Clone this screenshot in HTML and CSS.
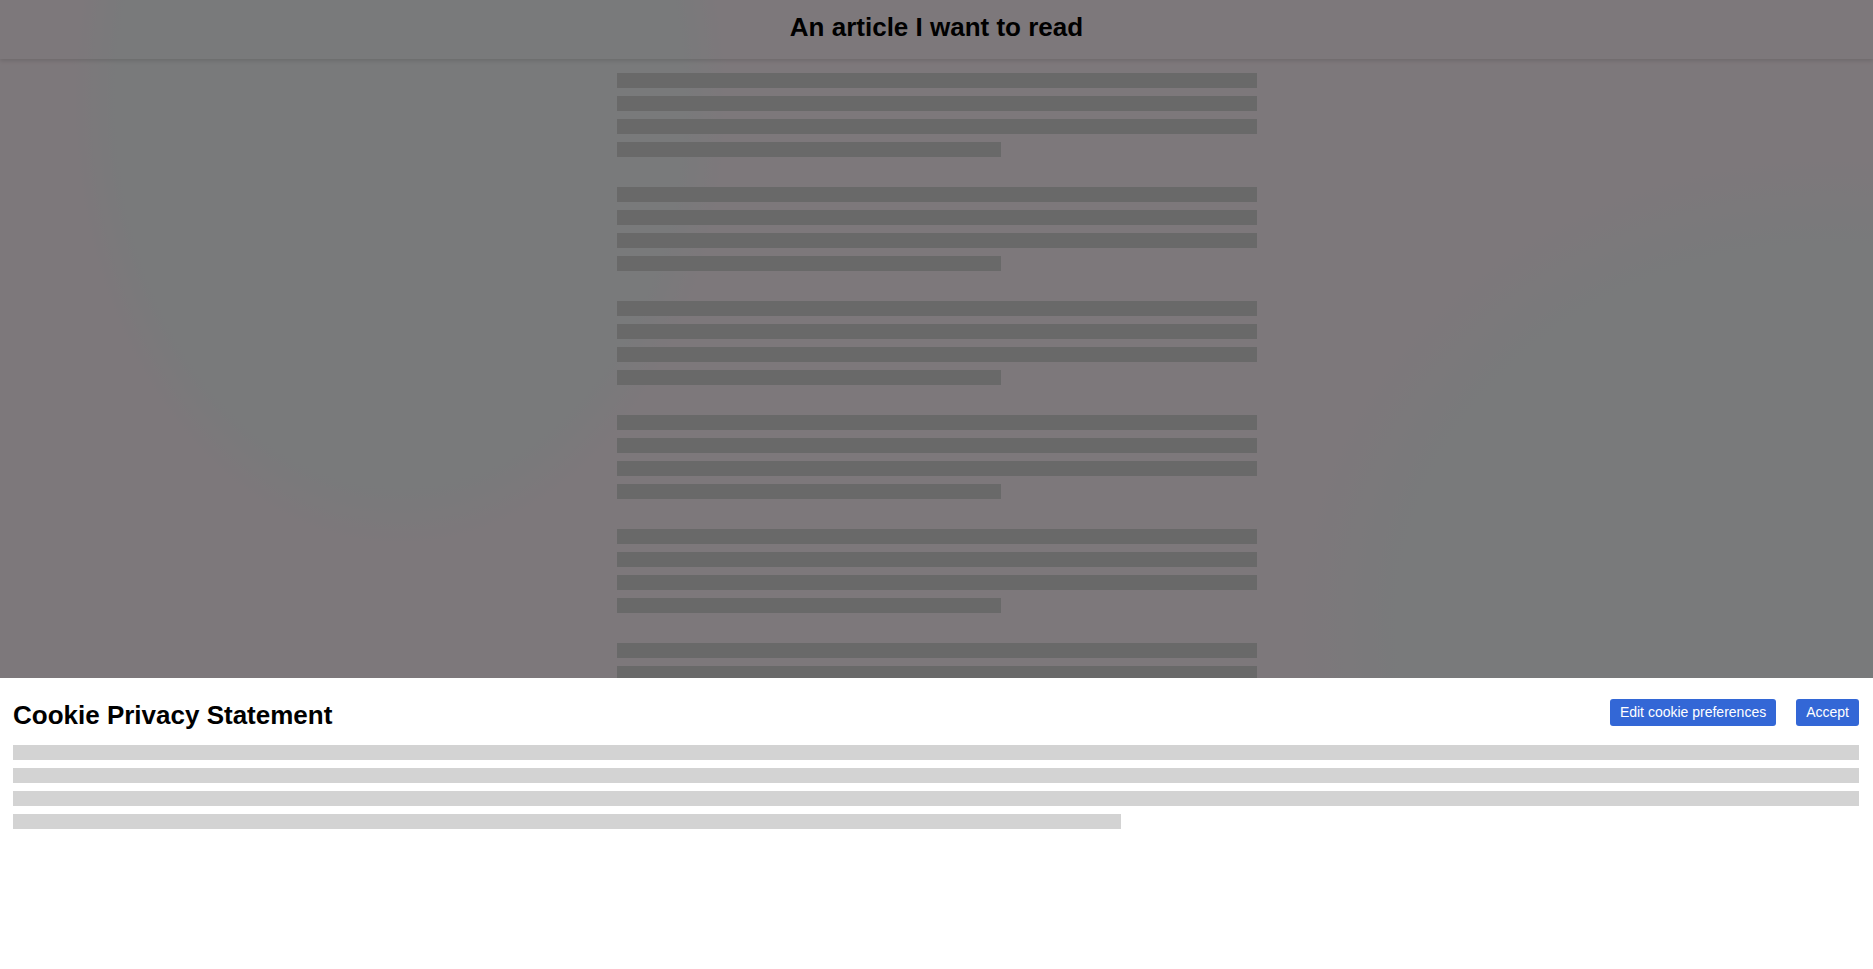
FILE: index.html
```html
<!DOCTYPE html>
<html lang="en">
<head>
    <meta charset="UTF-8">
    <meta name="viewport" content="width=device-width, initial-scale=1.0">
    <title>An article I want to read</title>
    <link rel="stylesheet" href="styles.css">
</head>
<body>
    <header class="site-header">
        <h1>An article I want to read</h1>
    </header>

    <!-- Placeholder article text -->
    <main class="article">
        <div class="para">
            <div class="line"></div>
            <div class="line"></div>
            <div class="line"></div>
            <div class="line short"></div>
        </div>
        <div class="para">
            <div class="line"></div>
            <div class="line"></div>
            <div class="line"></div>
            <div class="line short"></div>
        </div>
        <div class="para">
            <div class="line"></div>
            <div class="line"></div>
            <div class="line"></div>
            <div class="line short"></div>
        </div>
        <div class="para">
            <div class="line"></div>
            <div class="line"></div>
            <div class="line"></div>
            <div class="line short"></div>
        </div>
        <div class="para">
            <div class="line"></div>
            <div class="line"></div>
            <div class="line"></div>
            <div class="line short"></div>
        </div>
        <div class="para">
            <div class="line"></div>
            <div class="line"></div>
            <div class="line"></div>
            <div class="line short"></div>
        </div>
        <div class="para">
            <div class="line"></div>
            <div class="line"></div>
            <div class="line"></div>
            <div class="line short"></div>
        </div>
    </main>

    <!-- Dim layer behind the cookie banner -->
    <div class="overlay"></div>

    <div class="cookie-banner">
        <div class="banner-head">
            <h2>Cookie Privacy Statement</h2>
            <div class="actions">
                <button class="btn" type="button">Edit cookie preferences</button>
                <button class="btn" type="button">Accept</button>
            </div>
        </div>
        <div class="banner-text">
            <div class="line"></div>
            <div class="line"></div>
            <div class="line"></div>
            <div class="line short"></div>
        </div>
    </div>
</body>
</html>
```

FILE: styles.css
```css
body {
    font-family: "Liberation Sans", Arial, sans-serif;
    margin: 0;
    padding: 0;
    color: #000;
    background-color: #fbf0f6;
    background-image:
        radial-gradient(ellipse 330px 450px at 400px 100px, #f2f4f6 86%, rgba(242, 244, 246, 0) 100%),
        radial-gradient(ellipse 540px 470px at 1830px 620px, #f2f4f6 80%, rgba(242, 244, 246, 0) 100%);
    min-height: 100vh;
}

.site-header {
    padding: 12px 0 17px;
    text-align: center;
    box-shadow: 0 2px 4px rgba(0, 0, 0, 0.12);
}

.site-header h1 {
    margin: 0;
    font-size: 26px;
    line-height: 30px;
    font-weight: bold;
}

.article {
    max-width: 640px;
    margin: 14px auto 0;
}

.para {
    display: flex;
    flex-direction: column;
    gap: 8px;
    margin-bottom: 30px;
}

.line {
    height: 15px;
    background: #d3d3d3;
}

.line.short {
    width: 60%;
}

.overlay {
    position: fixed;
    top: 0;
    left: 0;
    right: 0;
    bottom: 0;
    background: rgba(0, 0, 0, 0.5);
}

.cookie-banner {
    position: fixed;
    left: 0;
    right: 0;
    bottom: 0;
    height: 30vh;
    box-sizing: border-box;
    background: #fff;
    padding: 21px 14px 0 13px;
}

.banner-head {
    display: flex;
    justify-content: space-between;
    align-items: flex-start;
}

.banner-head h2 {
    margin: 1px 0 0;
    font-size: 26px;
    line-height: 30px;
    font-weight: bold;
}

.actions {
    display: flex;
    gap: 20px;
}

.btn {
    font-family: "Liberation Sans", Arial, sans-serif;
    font-size: 14px;
    line-height: 17px;
    padding: 5px 10px;
    color: #fff;
    background: #3367d6;
    border: none;
    border-radius: 3px;
    cursor: pointer;
}

.banner-text {
    margin-top: 15px;
    display: flex;
    flex-direction: column;
    gap: 8px;
}
```
